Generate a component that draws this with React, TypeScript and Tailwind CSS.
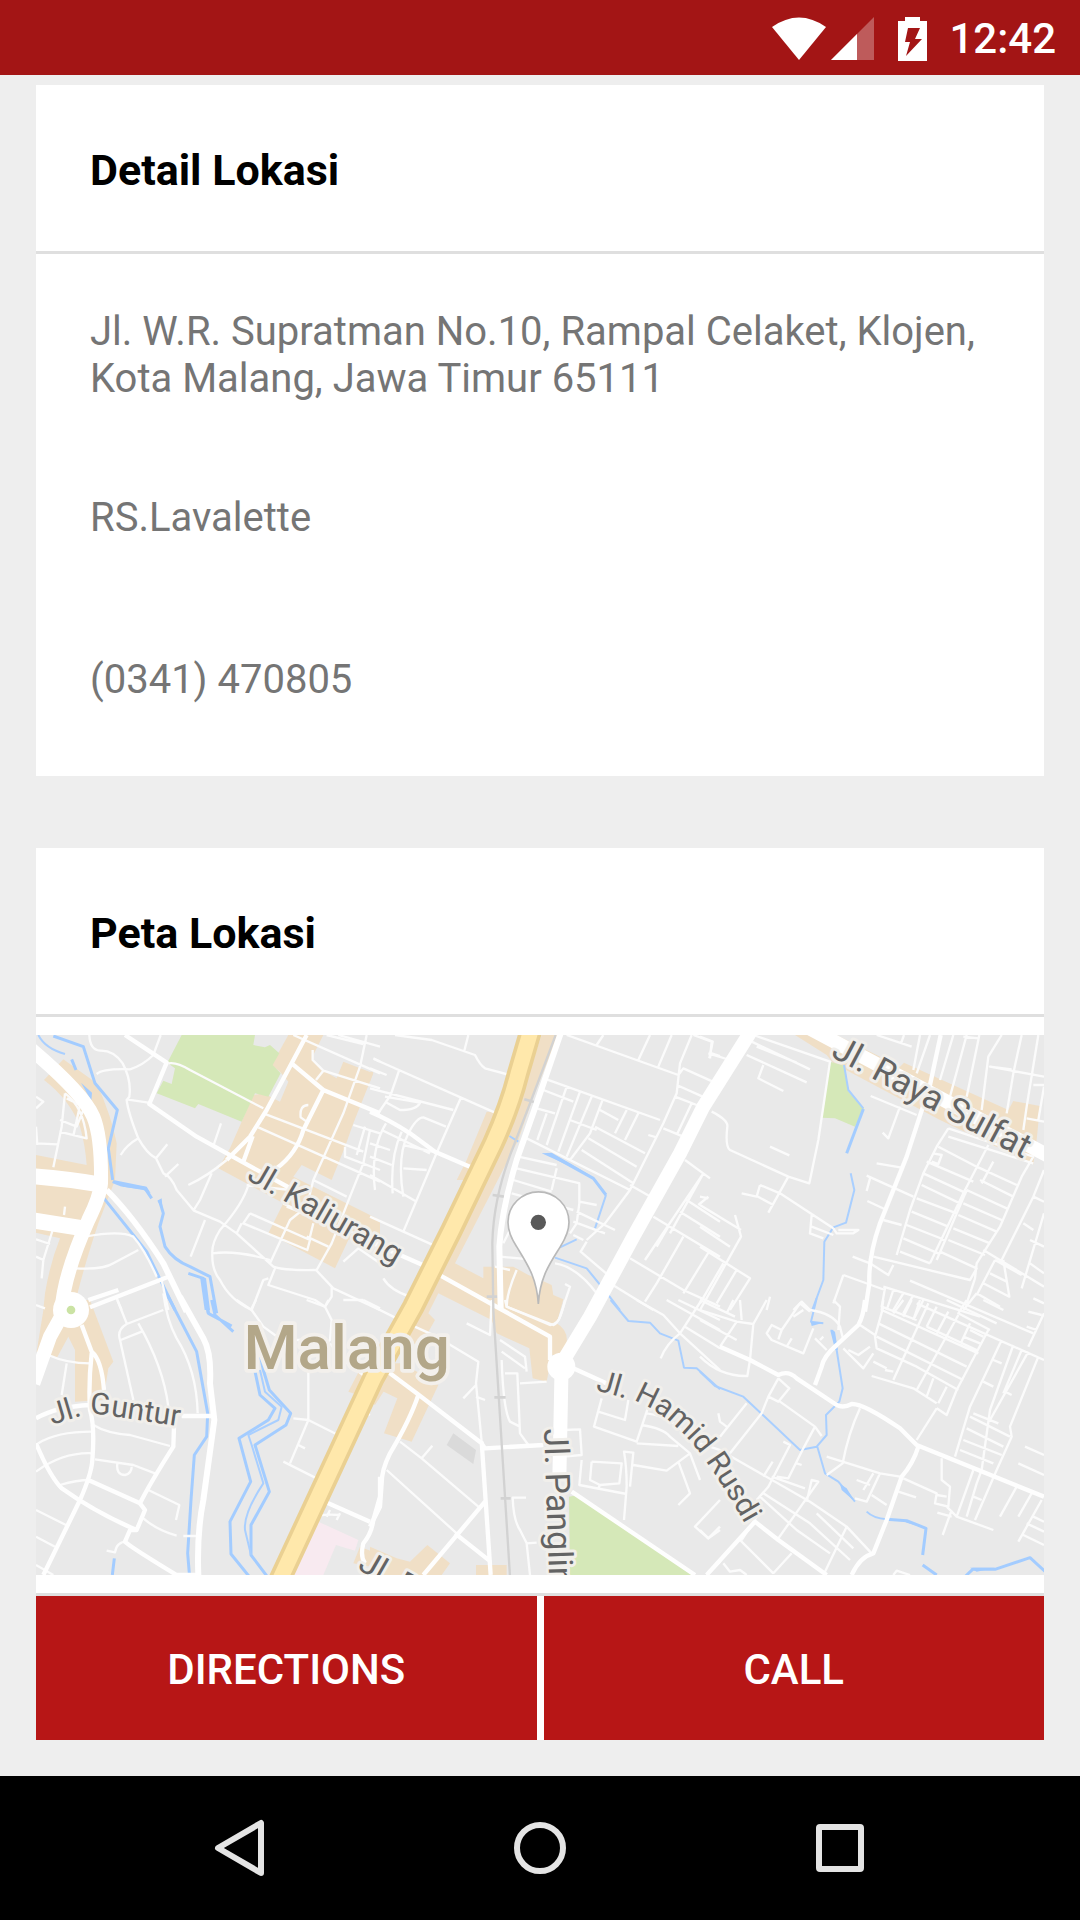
import type { ReactNode } from "react";

type TileKey = "nw" | "n" | "ne" | "sw" | "s" | "se";
type Tiles = Partial<Record<TileKey, string>>;

const origins: Record<TileKey, string> = {
  nw: "translate(-18 -15)",
  n: "translate(1002 -15)",
  ne: "translate(1992 -15)",
  sw: "translate(-18 795)",
  s: "translate(1002 795)",
  se: "translate(1992 795)",
};

function Areas({ tiles, color }: { tiles: Tiles; color: string }) {
  return (
    <g fill={color}>
      {(Object.keys(tiles) as TileKey[]).map((k) => (
        <path key={k} transform={origins[k]} d={tiles[k]} />
      ))}
    </g>
  );
}

function Lines({ tiles, color, width }: { tiles: Tiles; color: string; width: number }) {
  return (
    <g fill="none" stroke={color} strokeWidth={width} strokeLinejoin="round">
      {(Object.keys(tiles) as TileKey[]).map((k) => (
        <path key={k} transform={origins[k]} d={tiles[k]} />
      ))}
    </g>
  );
}

const builtUp: Tiles = {
  nw: "M42 150L100 88 200 160Q245 260 260 340L255 450 240 490 205 580Q165 700 140 800L40 840 45 790Q60 700 90 625L18 608V480H170V405L18 375V375L170 405Q165 340 150 290Q120 210 42 150Z M18 375L170 405V600L90 625 18 608Z M775 15H880L850 75 850 95 880 122 920 145 940 95 1030 130 970 280 945 350 905 450 815 405 790 440 1050 570V640L1000 610 955 630 915 715 715 610 760 520 565 415 600 355 670 195 700 190 750 215 775 155 750 125 725 105Z",
  n: "M515 15H565L490 200 445 330 255 700 340 745V710H430L475 735 500 745 545 765 550 795 580 808 560 880Q595 900 590 940L572 975H545L530 1055 488 1045 478 955 380 910 365 870 205 790 150 900 110 930 130 850 420 300Z M350 245H400L300 450H260L290 390Z M0 125H10L0 155Z M0 560L30 575 20 605 0 600Z",
  ne: "M285 15H410L600 110 612 98 925 240 940 213 1020 228 1010 330 1000 403 720 270 400 100 380 75Z",
  sw: "M45 0H180L250 185 235 205 220 300 135 305V150L115 110 80 175 20 155Z M955 275L1020 150 1070 180V260L1035 315 1000 290Z",
  s: "M30 190L100 190 205 255 125 425 42 400 82 295 30 270 -5 330Z M110 120L175 40 195 60 150 140Z M0 740L80 775 120 785 172 735 240 790 215 825H0Z M318 795H410V825H318Z M-30 740L20 760 0 800-50 790Z",
};

const parks: Tiles = {
  nw: "M455 15H675L670 45 705 52 720 45 748 70 728 105 752 130 715 200 675 190 635 275 505 222 495 235 380 190 400 152 425 162 435 115 412 98Z",
  ne: "M390 95L435 108 445 185 492 235 465 290 405 265 365 263Z",
  s: "M597 590L625 585 965 825H600Z",
};

const river: Tiles = {
  nw: "M70 18L160 50 195 160 262 240 235 355 248 450M248 455L275 465 345 475 365 505M388 510L400 550 390 590 405 650Q430 690 480 710L540 740 560 850M475 730L520 745 535 850M222 505L350 665 435 840M125 88L138 120",
  sw: "M412-15L500 155 533 340 530 410 493 465 483 600 473 760 478 820M528 0L535 40 605 78M545 0L555 45 610 95M670 105L690 160 700 210 718 270 782 340 768 375 675 435 718 575 663 675V765L712 830M672 200L690 285 735 325 715 360 627 415 662 545 600 665 603 762 658 830M253 775L247 825",
  n: "M540 373L670 445 708 495",
  ne: "M490 237L440 370",
  se: "M395 90L410 150M560 658L620 662 678 685 668 765M797 828L818 808H885L990 773 1035 814M668 795L710 825",
};

const creek: Tiles = {
  nw: "M25 15Q45 55 105 72",
  n: "M708 495L675 595M418 318L445 335M570 652L620 628M555 683L650 715 715 795 750 840",
  ne: "M432 105L445 180 490 235M452 430L463 480 438 578 400 592 373 635 370 750 335 845",
  sw: "M690 210L705 275 755 320 745 360 655 405 665 435 700 550Q640 640 645 690L663 765",
  s: "M722 0L775 63 840 68 870 100 925 122 942 203 980 205 1050 268",
  se: "M0 215L45 258 130 290 300 450 350 440 380 405 378 345 418 305 428 265 410 150M350-5L333 65 370 70M352 440L375 520 415 545 465 605M500 635Q520 655 560 658",
};

const lakes: Tiles = {
  nw: "M153 158L186 188 184 212Z M250 450L350 470 362 490 340 480 280 470Z M382 512L395 505 398 540Z M510 740L528 745 540 840H524Z",
  n: "M515 370L545 368 600 400 660 436Z",
  se: "M332 65L370 68 335 78Z M392 88L405 95 412 140Z M420 552L440 565 465 605 425 570Z M600 656L680 686 620 668Z M810 803H885L830 815Z",
};

const lanes: Tiles = {
  nw: "M178 15Q180 60 210 62 250 60 278 100 305 150 298 200L290 210Q295 250 325 325 350 370 378 385L400 430Q425 440 440 480L492 542 570 575 620 610 730 710Q760 722 858 720L910 775 1050 840M200 132Q220 115 300 118 340 105 370 75L392 15M290 208L355 218M272 375Q290 345 325 325M378 385L412 343M405 440L445 402M475 465Q530 440 590 390M550 348L573 280M545 430L510 510 490 542M525 570L482 680M655 465Q640 520 570 600 545 640 547 670 545 720 570 750 600 810 665 840L700 750 715 745M547 670Q620 660 720 690M735 715L715 765 855 810 885 830 905 800V770M415 100Q440 95 480 120L700 235M700 250L1000 365M685 292L1050 455M790 15L1050 130M848 60V90L880 122 858 150M880 122L1050 175M1010 15L990 110 940 250 850 450 830 530 780 570 720 700M780 480L650 465M660 550L840 630 832 660 640 580 660 550M635 580L620 610M770 530L1050 640M860 720L905 640 960 500 1000 400 1020 300M895 650L830 620M840 620L850 580M835 225Q808 225 812 262L830 275M850 450L950 500M760 520L800 540M945 350V380L1050 420M970 285L1050 310M1005 290L980 375M940 695L985 655 1050 700M105 190L95 290 70 412M105 190Q160 230 170 325L88 305M110 205L150 225 130 318M90 270L140 290 160 240M20 340L82 343M18 200L40 215 18 235M18 290L22 345M105 530L102 555M165 620Q270 600 310 620 345 660 380 740M135 715Q220 720 250 700L325 660M68 600L40 690 35 745M18 628L60 642M18 680L40 690M395 750L415 840M260 805L275 840M18 825L45 835M890 15L1000 42M925 15L1050 50M1030 85L1050 95",
  n: "M75 15L185 30 315 75Q330 105 345 115L420 135M295 15L283 62M12 87L380 250M87 122L62 195 28 245M0 175L250 240M45 215L90 240Q140 240 150 218L45 200M272 205L195 380 100 605M228 290L160 262Q140 262 115 310 80 380 100 500M48 280Q0 360 15 480M95 305Q60 380 68 490M35 300L180 370M0 340L60 360M0 380L65 405M100 345L210 370M100 415L170 420M0 435L140 515M0 560L200 650M40 745Q60 780 120 800M0 115L50 135M530 148L870 270M520 180L610 215M500 235L555 250M530 250L502 330M590 170L530 345M630 185L565 365M665 200L590 380M697 212L660 310 600 390M600 270L680 300M690 240L745 270M770 240L735 310M805 250L765 330M675 290L825 370M655 325L800 410M635 360L790 460M470 325L780 480M445 380L560 405M440 415L630 460M430 450L545 485M560 415L545 480M425 490L610 540M628 460V520L620 580 600 610M628 515L680 525M620 545L735 600M610 575L705 610M610 615L640 630M590 15L925 135 940 115 1040 160M700 15L680 45M840 15L805 90M905 15L865 110M965 15L930 100 920 190 880 280 780 480 705 580 650 630M970 15L1025 35 1020 85M1025 70L1050 78M920 165L1010 205M915 200L980 225M965 220L920 315M880 295L940 320M835 315L860 322M945 390L1020 445M1000 430L825 690M1000 430L900 610M780 465L850 505M950 510L1050 575M985 525L1015 500M930 545L1050 620M850 560L1050 680M940 620L860 760 825 815M895 590L860 650M780 685L940 780 1050 830M720 760L850 840M1020 660L940 790M650 635L632 665 720 740M555 700Q620 710 680 790M390 680L500 690M375 710L420 720M440 720Q410 790 410 830L540 885Q565 880 570 860L600 770 585 762M400 640L440 560",
  ne: "M0 20L38 35 28 85M25 70L90 90M155 35L330 118M140 75L320 157M170 50L290 98M190 105L175 145 250 183M160 15L390 95 355 330 328 460 265 440 90 360Q75 350 82 290 85 270 35 245M265 440L205 548M180 465L240 490 400 595M180 465L170 500 125 490M170 498L220 525M335 555L330 610 370 625M335 590L400 615M400 595L410 610H460L475 600H415M210 350L268 376M105 555L123 620 0 840M123 600L0 525M0 500L25 505M0 590L90 650M0 650L150 745 90 840M70 700L0 820M110 720L50 820M512 198L650 255M600 230L565 325 548 308M530 400L605 413M500 437L640 500M510 445L500 483M502 513L560 540M550 570L605 585M530 15L635 50M612 15L603 40M660 15L640 120M690 15L650 130M760 15L720 150M800 15L750 200M790 20L835 25M838 15L800 200M905 15L865 80 845 240M965 15L940 130 920 250M1015 15L980 230 970 300M1032 140L870 110 935 118M1000 165H1032M1032 170L1015 270M980 265L1032 275M745 295L710 350 670 430 630 540 590 675M745 320L1000 400M745 295L1000 380 965 440 900 590 830 700 825 745M715 350L830 410M700 370L725 375 715 402 695 395M865 345L790 490 690 700M800 480L710 690M680 395L820 455M880 395L845 460M830 410L950 465M670 430L800 490M665 465L780 520M650 505L770 550M635 545L745 590M620 585L735 630M610 625L715 670M600 665L690 700M840 450L940 500M800 480L920 535M790 520L905 570M775 555L890 605M760 595L870 640M745 630L855 675M720 665L830 715 810 750 520 680M1032 420L1000 500 900 700M1000 500L1032 515M1032 550L965 775M970 580L1000 600M990 630L1032 650M850 660L1032 770M885 690L830 795M885 690L965 735M910 690L928 800 850 760M870 730L920 755M458 680L510 700 565 735 580 705M430 735L400 820M430 735L555 780M630 752L1000 910M555 775L545 830 650 870M580 780L560 840M610 790L580 840M640 795L610 850M670 810L640 870M550 770L840 860M830 790L790 840M825 745L800 820M830 790L900 830M210 800L200 840M280 840L305 815 330 840M1000 805L1032 820M990 700L1032 730",
  sw: "M400-20Q410 60 440 115 500 210 503 340M262 0L290 70M400 30L290 72Q260 90 270 120L310 300M325 70Q400 200 415 320M272 120L335 95M55 165Q110 190 180 190M110 190L95 285M25 430Q80 395 185 395M190 375Q230 400 300 405L420 438M18 515Q100 455 190 460M90 555Q140 540 180 540M195 478L310 495 375 520M262 490Q258 525 285 525 305 520 305 500M355 570L448 615 438 660M340 655Q380 690 440 707M460 708H500M18 630L108 675M18 710L75 740M230 752L255 757Q260 725 290 725M18 795L70 825M620 0L665 30 700 80 755 120H860M665 25L678 0M830 0L885 20 905 60 900 120 860 160M885 20L895 0M940 0L1000 0M835 190V360L780 490M790 355L835 360 920 403M805 435L825 445M760 485L860 535M855 660Q850 640 930 645M900 630L890 650M930 640L920 660M1005 320L1000 335 1020 345M1000 0L1050 25M940 180L1005 230M930 170L900 130",
  s: "M0 15L80 55 200 110 325 185 318 250 335 425M318 290L345 300M280 295L318 255M290 70L360 105 365 0M390 120L465 170 470 215M395 155L465 205M395 180Q400 330 420 365L450 380M405 220H442L450 400 475 435M450 250L530 245M90 425L155 475 325 620M155 475L187 437M50 510L260 700M468 593H428Q430 660 450 690L470 730 480 825M470 730L500 728M580 390L630 388 635 465 580 470M405 0L410 20 550 75Q570 70 585 0M695 295L672 380 800 425 835 320M685 335L765 360 775 300M815 375Q880 385 900 410L960 460 990 540M830 340Q910 350 960 420L980 450M800 430L925 438M635 480L628 555 770 582M665 485L755 490 748 550 690 555 660 540 665 485M685 565L690 555M762 660L770 560Q770 500 762 455L790 458 780 560M790 495L890 512 960 460M925 485L960 580 925 615M1050 600L975 680 1015 715 1050 690M1010 825L1050 785M800 0L880 45 930 100 1050 210M995 0L930 100Q890 130 872 175M890 0L1050 90M925 0L1050 60M945 80L1050 145",
  se: "M0 30L110 65 160 72 150 180M0 60L110 120M0 170Q60 230 142 228L150 180M110 65L60 140M0 0L105 50M80 40L100 0M125 60L120 0M160 72L200 0M235 235L205 290 185 340 90 460 0 430M235 235L268 265 235 305 205 290M240 305L345 380 310 445 265 535 230 530M345 380L365 408M140 310L60 410M55 340L60 365 80 380M250 425L270 435 205 560 170 600M85 465L330 605 440 680 515 760M190 580L330 670 450 780M180 590L290 690 390 760M170 650L125 720M120 720L220 820M275 760L220 820M235 715L355 545 335 540 320 605M215 530L315 565M190 530L218 485M440 680L375 815M350 640L460 745M480 325Q445 400 428 490L380 525M380 470L540 520 600 530M520 520L490 570M540 520L500 605 465 595M470 540L510 555M515 585L560 615M610 535L710 580 705 610 745 620 750 560 725 540V475M595 575L648 592M740 590L710 585M740 620L770 650 880 690M755 630L728 705M712 638L755 650M710 325L650 420M710 325L740 345 770 270 865 90M710 310L640 265 515 228M550 0L545 30 835 160M550 20L525 110 530 145 650 200 775 270M480 75L525 105M610 0L580 40M635 0L610 50M660 0L640 60M685 10L580 240M710 20L680 80M745 35L710 100M775 45L650 270M535 70L800 200M530 110L790 240M680 80L830 150M650 10L1032 180M810 70L780 135 825 155M810 90L850 110M790 110L840 130M555 210L580 215M520 185L560 205M700 235L680 290M740 260L715 310M905 120L810 320 765 470M940 135L870 330 845 510 830 550 800 650M965 150L910 280M1015 170L930 380 935 410 890 510 825 660M985 155L870 360M880 180L905 190M850 245L880 260M915 275L935 285M820 340L895 370M810 350L930 410M800 385L910 440M790 420L905 465M780 450L880 490M820 510L770 650M820 590L845 600M950 560L900 650M995 580L955 650M1025 600L955 725M1000 650L1032 665M980 670L1032 695M970 705L1032 735M975 440L1032 465M955 490L1032 525M800 0L775 40 870 90M740 0L890 70M850 0L910 30M1032 40L985 140M985 35L1025 45M980 80L1010 90M430 145L490 205 520 160M445 150L475 165 510 140M340 85L310 160 215 120 200 100 215 75 245 90 300 10 330 35M345 115L380 150M260 140L275 115M235 118L245 90M330 30Q400 40 420 80L430 120M415 90L420 20 400 0M360 120L370 110M70 790L90 815 120 810 140 825M580 825L590 812 630 825M0 690L25 715 60 680M280 50L310 30M290 490L305 495",
};

const streets: Tiles = {
  nw: "M285 15L410 98 358 222 500 320 690 425 790 480M640 395L668 318M830 15L785 100 710 240 660 320 590 390M785 100L880 180 1050 250M880 180L820 300Q800 370 740 415M180 832L415 740",
  n: "M0 245Q60 270 120 310L195 365 310 415M0 635L170 710M205 733L370 825",
  ne: "M722 15L690 165 620 380 540 580Q505 680 508 760L495 845",
  sw: "M155 75L185 155Q215 180 222 270M185 160Q175 250 180 330 195 380 187 480 185 520 150 600L40 825M18 430Q60 530 95 565 200 640 320 690L345 630 330 610 175 540M330 610Q360 550 430 440L432 380M320 690H300L285 725Q300 740 440 825H510M175 0L265-30M18 355Q80 320 180 315M455 348H545M878 602L1020 665M1050 590L1030 660Q1025 700 1000 730 990 770 1005 790M1050 530V600",
  s: "M40 205L140 280 335 430 345 445 520 435M145 285Q120 360 60 460 35 510 35 550L30 620 0 680M335 425L362 825M160 825L345 605M255 700L362 785M370 15L540 110V180M600 200L720 255M605 575L975 825",
  se: "M60 140L150 180 235 225Q265 210 290 235L410 315Q430 325 455 312 490 310 600 385L650 435 1032 590M495 0Q490 50 475 75L410 135Q370 170 365 200L345 255M655 440Q640 490 605 530L560 660 520 760Q480 770 455 825M20 825L165 665 235 720 380 825",
};

const avenues: Tiles = {
  nw: "M230 480Q310 560 400 700L470 845",
  n: "M572 10L500 220 440 390Q395 540 388 650L392 835",
  sw: "M450-10L520 115Q545 160 540 250L553 360 520 600Q500 700 505 825",
};

const boulevards: Tiles = {
  nw: "M0 55Q160 190 190 260 215 320 213 460 210 500 175 570 100 740 95 840",
  n: "M1145 0L1000 230 930 370 790 620 660 860 575 1000 568 1345",
  ne: "M310-15L1050 380",
  sw: "M110 20L60 110 10 250",
};

const highway = "M483 0L445 130Q420 230 370 340L245 600 130 830 10 1045-285 1680";

function Label({ children, at, angle, size }: { children: ReactNode; at: string; angle: number; size: number }) {
  return (
    <text transform={`translate(${at}) rotate(${angle})`} fontSize={size}>
      {children}
    </text>
  );
}

function LocationMap() {
  return (
    <svg viewBox="0 0 3024 1620" className="block aspect-[28/15] w-full bg-[#e9e9e9] font-[Roboto,sans-serif]" role="img" aria-label="Peta Malang">
      <Areas tiles={builtUp} color="#f0dfc6" />
      <Areas tiles={parks} color="#d5e8b8" />
      <Areas tiles={{ sw: "M865 665L985 720 975 752 918 735 880 825H785Z" }} color="#f8eaf0" />
      <Areas tiles={{ s: "M250 400L318 450 310 492 230 435Z" }} color="#dadada" />
      <Lines tiles={river} color="#a3ccff" width={9} />
      <Lines tiles={creek} color="#a9cfff" width={6} />
      <Areas tiles={lakes} color="#a3ccff" />
      <Lines tiles={lanes} color="#fbfbfb" width={7} />
      <Lines tiles={streets} color="#fefefe" width={13} />
      <Lines tiles={{ n: "M557 15L480 220 430 350Q370 500 367 640L370 840 420 1640" }} color="#d2d2d2" width={7} />
      <Lines tiles={{ n: "M463 208L492 216M368 495L402 500M350 800H382", s: "M373 292H407M392 595H422" }} color="#d2d2d2" width={8} />
      <Lines tiles={avenues} color="#ffffff" width={18} />
      <Lines tiles={boulevards} color="#ffffff" width={42} />
      <Lines tiles={{ nw: "M0 438Q110 445 220 465M0 570L160 595" }} color="#ffffff" width={48} />
      <g transform={origins.n} fill="none">
        <path d={highway} stroke="#ead092" strokeWidth="68" />
        <path d={highway} stroke="#ffe8ab" strokeWidth="46" />
      </g>
      <g transform={origins.sw}>
        <circle cx="123" cy="30" r="54" fill="#fff" />
        <circle cx="123" cy="30" r="13" fill="#cbe3a4" />
      </g>
      <circle transform={origins.s} cx="574" cy="200" r="42" fill="#fff" />

      <g fill="#636363" stroke="#f1efeb" strokeWidth="18" strokeLinejoin="round" paintOrder="stroke">
        <g transform={origins.nw}>
          <Label at="648 447" angle={30} size={94}>Jl. Kaliurang</Label>
        </g>
        <g transform={origins.ne}>
          <Label at="390 78" angle={28} size={104}>Jl. Raya Sulfat</Label>
        </g>
        <g transform={origins.s}>
          <Label at="522 386" angle={88} size={102}>Jl. Panglima</Label>
        </g>
        <g transform={origins.sw}>
          <Label at="980 806" angle={30} size={98}>Jl. R</Label>
          <path id="guntur" d="M66 374L140 352Q190 335 250 349L480 384" fill="none" stroke="none" />
          <text fontSize="90"><textPath href="#guntur">Jl. Guntur</textPath></text>
        </g>
        <g transform={origins.s}>
          <path id="hamid" d="M676 270L800 305Q895 345 975 440 1040 520 1150 715" fill="none" stroke="none" />
          <text fontSize="90"><textPath href="#hamid">Jl. Hamid Rusdi</textPath></text>
        </g>
        <text x="932" y="1002" fill="#b3a789" stroke="#f3f0ec" strokeWidth="22" fontSize="186" fontWeight="500" textAnchor="middle">
          Malang
        </text>
      </g>

      <g transform={origins.n}>
        <path d="M505 822C500 740 470 700 440 650 420 620 414 600 414 577A91 91 0 0 1 597 577C597 600 590 620 571 650 540 700 510 740 505 822Z" fill="#fff" stroke="#b9b9b9" strokeWidth="5" />
        <circle cx="505" cy="577" r="23" fill="#595959" />
      </g>
    </svg>
  );
}

function StatusBar() {
  return (
    <header className="flex h-[75px] items-center justify-end bg-[#a31515] pt-[2px] pr-6 text-white">
      <svg viewBox="0 0 54 44" className="h-[44px] w-[54px]" fill="currentColor" aria-label="Wi-Fi">
        <path d="M0 10Q27-9 54 10L27 43Z" />
      </svg>
      <svg viewBox="0 0 43 44" className="ml-[5px] h-[44px] w-[43px]" fill="currentColor" aria-label="Sinyal">
        <path d="M43 0V43H0Z" opacity="0.3" />
        <path d="M26 17V43H0Z" />
      </svg>
      <svg viewBox="0 0 29 44" className="ml-6 h-[44px] w-[29px]" fill="currentColor" aria-label="Mengisi daya">
        <path fillRule="evenodd" d="M7 0H22V4H29V44H0V4H7ZM10 11L7 25H12L8 39 24 22H17L22 11Z" />
      </svg>
      <time className="ml-[22px] text-[42px] leading-[50px] font-medium">12:42</time>
    </header>
  );
}

function CardTitle({ children }: { children: ReactNode }) {
  return (
    <h2 className="border-b-3 border-[#dfdfdf] px-[54px] pt-[60px] pb-[56px] text-[43px] leading-[50px] font-bold text-black">
      {children}
    </h2>
  );
}

const action = "h-36 flex-1 bg-[#b71616] pt-[2px] text-[42px] font-medium text-white";

export default function App() {
  return (
    <div className="flex min-h-screen flex-col bg-[#eeeeee] font-[Roboto,sans-serif]">
      <StatusBar />
      <main className="flex-1 px-9 pt-[10px] pb-9">
        <section className="bg-white">
          <CardTitle>Detail Lokasi</CardTitle>
          <div className="flex flex-col px-[54px] pt-[54px] pb-[73px] text-[40px] leading-[47px] text-[#757575]">
            <p>Jl. W.R. Supratman No.10, Rampal Celaket, Klojen, Kota Malang, Jawa Timur 65111</p>
            <p className="mt-[92px]">RS.Lavalette</p>
            <a href="tel:0341470805" className="mt-[115px]">(0341) 470805</a>
          </div>
        </section>
        <section className="mt-[72px] bg-white">
          <CardTitle>Peta Lokasi</CardTitle>
          <div className="border-b-3 border-[#dfdfdf] py-[18px]">
            <LocationMap />
          </div>
          <div className="flex gap-[7px]">
            <button type="button" className={action}>DIRECTIONS</button>
            <button type="button" className={action}>CALL</button>
          </div>
        </section>
      </main>
      <nav className="grid h-36 grid-cols-3 bg-black px-[90px] text-[#e4e4e4]">
        <button type="button" aria-label="Kembali" className="flex items-center justify-center">
          <svg viewBox="0 0 60 60" className="size-[60px]" fill="none" stroke="currentColor" strokeWidth="6" strokeLinejoin="round">
            <path d="M51 5V55L8 30Z" />
          </svg>
        </button>
        <button type="button" aria-label="Beranda" className="flex items-center justify-center">
          <svg viewBox="0 0 60 60" className="size-[60px]" fill="none" stroke="currentColor" strokeWidth="6">
            <circle cx="30" cy="30" r="23" />
          </svg>
        </button>
        <button type="button" aria-label="Aplikasi terbaru" className="flex items-center justify-center">
          <svg viewBox="0 0 60 60" className="size-[60px]" fill="none" stroke="currentColor" strokeWidth="6">
            <rect x="9" y="9" width="42" height="42" rx="1" strokeLinejoin="round" />
          </svg>
        </button>
      </nav>
    </div>
  );
}
